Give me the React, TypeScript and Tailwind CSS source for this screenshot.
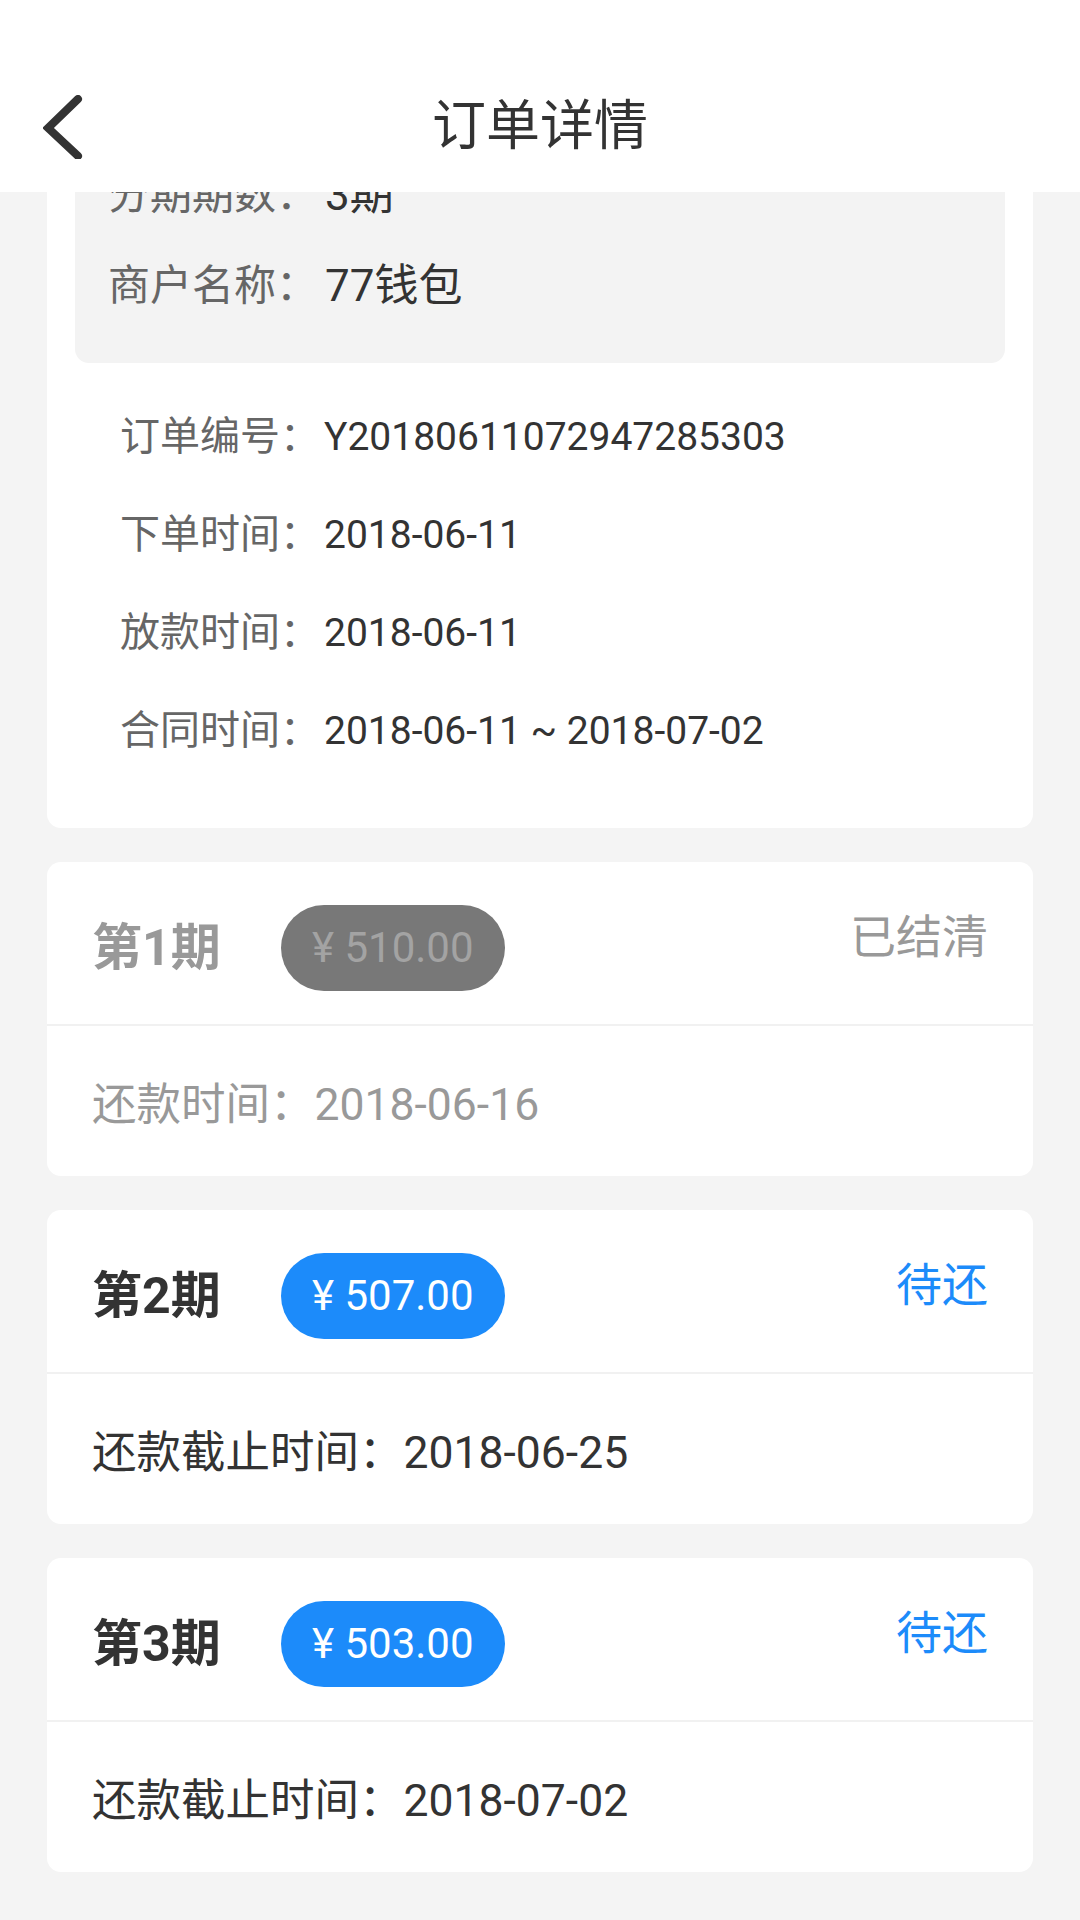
import React from "react";

type Installment = {
  period: string;
  amount: string;
  status: string;
  dateLabel: string;
  date: string;
  settled: boolean;
};

const installments: Installment[] = [
  { period: "第1期", amount: "¥ 510.00", status: "已结清", dateLabel: "还款时间：", date: "2018-06-16", settled: true },
  { period: "第2期", amount: "¥ 507.00", status: "待还", dateLabel: "还款截止时间：", date: "2018-06-25", settled: false },
  { period: "第3期", amount: "¥ 503.00", status: "待还", dateLabel: "还款截止时间：", date: "2018-07-02", settled: false },
];

const summary = [
  { label: "分期期数：", value: "3期" },
  { label: "商户名称：", value: "77钱包" },
];

const details = [
  { label: "订单编号：", value: "Y20180611072947285303" },
  { label: "下单时间：", value: "2018-06-11" },
  { label: "放款时间：", value: "2018-06-11" },
  { label: "合同时间：", value: "2018-06-11 ~ 2018-07-02" },
];

function InstallmentCard({ item }: { item: Installment }) {
  return (
    <div className="bg-white rounded-[14px] overflow-hidden">
      {/* Header row */}
      <div className="h-[162px] flex items-center pt-[10px] px-[45px]">
        <span
          className={`w-[189px] shrink-0 text-[50px] font-bold leading-none ${
            item.settled ? "text-[#999999]" : "text-[#333333]"
          }`}
        >
          {item.period}
        </span>
        <span
          className={`h-[86px] px-[31px] rounded-full flex items-center text-[42px] leading-none ${
            item.settled ? "bg-[#787878] text-[#a3a3a3]" : "bg-[#1c8bfa] text-white"
          }`}
        >
          {item.amount}
        </span>
        <span
          className={`ml-auto mb-[22px] text-[46px] leading-none ${
            item.settled ? "text-[#999999]" : "text-[#1c8bfa]"
          }`}
        >
          {item.status}
        </span>
      </div>
      <div className="h-[2px] bg-[#f1f1f1]" />
      {/* Date row */}
      <div
        className={`h-[150px] flex items-center pt-[8px] px-[45px] text-[44.5px] leading-none ${
          item.settled ? "text-[#999999]" : "text-[#333333]"
        }`}
      >
        {item.dateLabel}
        {item.date}
      </div>
    </div>
  );
}

export default function App() {
  return (
    <div className="w-[1080px] h-[1920px] flex flex-col overflow-hidden bg-[#f4f4f4] font-['Roboto','Noto_Sans_CJK_SC',sans-serif]">
      {/* Nav bar */}
      <header className="relative z-10 h-[192px] shrink-0 bg-white pt-[63px]">
        <div className="h-[128px] grid grid-cols-[1fr_auto_1fr] items-center">
          <div className="pl-[43px] flex items-center">
            <svg width="40" height="64" viewBox="0 0 40 64" fill="none">
              <path
                d="M35 4 L5 33 L35 61"
                stroke="#333333"
                strokeWidth="8"
                strokeLinecap="round"
                strokeLinejoin="miter"
              />
            </svg>
          </div>
          <h1 className="text-[54px] text-[#333333] leading-none">订单详情</h1>
          <div />
        </div>
      </header>

      {/* Scrolled content, clipped under the nav bar */}
      <div className="flex-1 overflow-hidden">
        <div className="flex flex-col gap-[34px] -mt-[91px] px-[47px]">
          {/* Order info */}
          <div className="bg-white rounded-[14px] pt-[28px] pb-[48px]">
            <div className="mx-[28px] rounded-[14px] bg-[#f3f3f3] pt-[20px] pb-[32px] px-[33px]">
              {summary.map((row) => (
                <div key={row.label} className="h-[91px] flex items-center">
                  <span className="w-[217px] shrink-0 whitespace-nowrap text-[42px] text-[#666666] leading-none">
                    {row.label}
                  </span>
                  <span className="text-[44px] text-[#333333] leading-none">{row.value}</span>
                </div>
              ))}
            </div>
            <div className="mt-[25px] px-[73px]">
              {details.map((row) => (
                <div key={row.label} className="h-[98px] flex items-center">
                  <span className="w-[204px] shrink-0 whitespace-nowrap text-[40px] text-[#666666] leading-none">
                    {row.label}
                  </span>
                  <span className="text-[39px] text-[#333333] leading-none">{row.value}</span>
                </div>
              ))}
            </div>
          </div>

          {installments.map((item) => (
            <InstallmentCard key={item.period} item={item} />
          ))}
        </div>
      </div>
    </div>
  );
}
